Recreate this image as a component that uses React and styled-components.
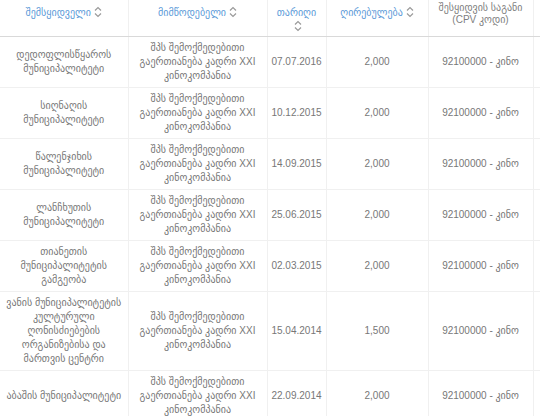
import React from 'react';
import styled, {createGlobalStyle} from "styled-components";

const GlobalStyle = createGlobalStyle`
  body {
    margin: 0;
    background: #fff;
    overflow: hidden;
    font-family: "Liberation Sans", "DejaVu Sans", sans-serif;
  }
`

const Wrapper = styled.div`
  width: 540px;
  height: 416px;
  overflow: hidden;
`

const Table = styled.table`
  width: 600px;
  table-layout: fixed;
  border-collapse: collapse;
  font-size: 10px;
  color: #777;
`

const HeadCell = styled.th`
  font-weight: 400;
  text-align: center;
  vertical-align: top;
  height: 36px;
  box-sizing: border-box;
  padding: ${props => props.$compact ? '2px 4px 0' : '6px 4px 0'};
  line-height: ${props => props.$compact ? '12px' : '14px'};
  color: ${props => props.$sortable ? '#5b9ad8' : '#808080'};
  border-bottom: 1px solid #d9d9d9;
  border-left: 1px solid #f0f0f0;
  white-space: pre-line;
  &:first-child { border-left: none; }
`

const SortIcon = styled.svg`
  width: 8px;
  height: 12px;
  margin-left: 3px;
  vertical-align: -2px;
  stroke: #9a9a9a;
  fill: none;
  stroke-width: 1.2;
`

const Cell = styled.td`
  text-align: center;
  vertical-align: middle;
  padding: 4px 2px;
  line-height: 14px;
  border-bottom: 1px solid #f0f0f0;
  border-left: 1px solid #f0f0f0;
  white-space: pre-line;
  &:first-child { border-left: none; }
`

const Sort = () => (
    <SortIcon viewBox="0 0 8 12">
        <path d="M1 4.5 L4 1.5 L7 4.5"/>
        <path d="M1 7.5 L4 10.5 L7 7.5"/>
    </SortIcon>
)

const supplier = 'შპს შემოქმედებითი\nგაერთიანება კადრი XXI\nკინოკომპანია'

const rows = [
    {buyer: 'დედოფლისწყაროს\nმუნიციპალიტეტი', date: '07.07.2016', price: '2,000'},
    {buyer: 'სიღნაღის\nმუნიციპალიტეტი', date: '10.12.2015', price: '2,000'},
    {buyer: 'წალენჯიხის\nმუნიციპალიტეტი', date: '14.09.2015', price: '2,000'},
    {buyer: 'ლანჩხუთის\nმუნიციპალიტეტი', date: '25.06.2015', price: '2,000'},
    {buyer: 'თიანეთის\nმუნიციპალიტეტის\nგამგეობა', date: '02.03.2015', price: '2,000'},
    {buyer: 'ვანის მუნიციპალიტეტის\nკულტურული\nღონისძიებების\nორგანიზებისა და\nმართვის ცენტრი', date: '15.04.2014', price: '1,500'},
    {buyer: 'აბაშის მუნიციპალიტეტი', date: '22.09.2014', price: '2,000'},
]

const App = () => {
    return (
        <Wrapper>
            <GlobalStyle/>
            <Table>
                <colgroup>
                    <col style={{width: 128}}/>
                    <col style={{width: 139}}/>
                    <col style={{width: 59}}/>
                    <col style={{width: 102}}/>
                    <col style={{width: 105}}/>
                    <col style={{width: 67}}/>
                </colgroup>
                <thead>
                    <tr>
                        <HeadCell $sortable>შემსყიდველი<Sort/></HeadCell>
                        <HeadCell $sortable>მიმწოდებელი<Sort/></HeadCell>
                        <HeadCell $sortable>თარიღი<Sort/></HeadCell>
                        <HeadCell $sortable>ღირებულება<Sort/></HeadCell>
                        <HeadCell $compact>{'შესყიდვის საგანი\n(CPV კოდი)'}</HeadCell>
                        <HeadCell/>
                    </tr>
                </thead>
                <tbody>
                    {rows.map((r, i) => (
                        <tr key={i}>
                            <Cell>{r.buyer}</Cell>
                            <Cell>{supplier}</Cell>
                            <Cell>{r.date}</Cell>
                            <Cell>{r.price}</Cell>
                            <Cell>92100000 - კინო</Cell>
                            <Cell/>
                        </tr>
                    ))}
                </tbody>
            </Table>
        </Wrapper>
    );
};

export default App;
